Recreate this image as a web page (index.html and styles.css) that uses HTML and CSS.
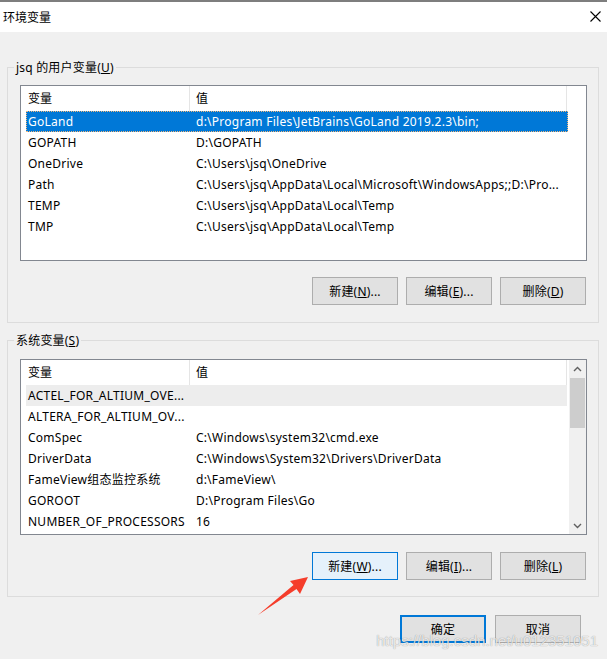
FILE: index.html
```html
<!DOCTYPE html>
<html lang="zh-CN">
<head>
<meta charset="utf-8">
<title>环境变量</title>
<link rel="stylesheet" href="styles.css">
</head>
<body>
<div class="topline"></div>
<header class="titlebar">
  <span class="title">环境变量</span>
  <svg class="close" width="11" height="11" viewBox="0 0 11 11"><path d="M0.5 0.5 L10.5 10.5 M10.5 0.5 L0.5 10.5" stroke="#000" stroke-width="1.1" fill="none"/></svg>
</header>
<main class="dialog">
  <fieldset class="group group-user">
    <legend>jsq 的用户变量(<u>U</u>)</legend>
    <div class="listbox">
      <div class="listbody">
        <div class="lhead"><span class="h1">变量</span><span class="h2">值</span></div>
        <div class="row selected"><span>GoLand</span><span>d:\Program Files\JetBrains\GoLand 2019.2.3\bin;</span></div>
        <div class="row"><span>GOPATH</span><span>D:\GOPATH</span></div>
        <div class="row"><span>OneDrive</span><span>C:\Users\jsq\OneDrive</span></div>
        <div class="row"><span>Path</span><span>C:\Users\jsq\AppData\Local\Microsoft\WindowsApps;;D:\Pro...</span></div>
        <div class="row"><span>TEMP</span><span>C:\Users\jsq\AppData\Local\Temp</span></div>
        <div class="row"><span>TMP</span><span>C:\Users\jsq\AppData\Local\Temp</span></div>
      </div>
    </div>
    <div class="btnrow">
      <button class="btn">新建(<u>N</u>)...</button>
      <button class="btn">编辑(<u>E</u>)...</button>
      <button class="btn">删除(<u>D</u>)</button>
    </div>
  </fieldset>

  <fieldset class="group group-sys">
    <legend>系统变量(<u>S</u>)</legend>
    <div class="listbox">
      <div class="listbody">
        <div class="lhead"><span class="h1">变量</span><span class="h2">值</span></div>
        <div class="row hover"><span>ACTEL_FOR_ALTIUM_OVE...</span><span></span></div>
        <div class="row"><span>ALTERA_FOR_ALTIUM_OV...</span><span></span></div>
        <div class="row"><span>ComSpec</span><span>C:\Windows\system32\cmd.exe</span></div>
        <div class="row"><span>DriverData</span><span>C:\Windows\System32\Drivers\DriverData</span></div>
        <div class="row"><span>FameView组态监控系统</span><span>d:\FameView\</span></div>
        <div class="row"><span>GOROOT</span><span>D:\Program Files\Go</span></div>
        <div class="row"><span>NUMBER_OF_PROCESSORS</span><span>16</span></div>
      </div>
      <div class="scrollbar">
        <div class="sb-btn"><svg width="9" height="6" viewBox="0 0 9 6"><path d="M1 5 L4.5 1.5 L8 5" stroke="#606060" stroke-width="1.4" fill="none"/></svg></div>
        <div class="sb-track"><div class="sb-thumb"></div></div>
        <div class="sb-btn"><svg width="9" height="6" viewBox="0 0 9 6"><path d="M1 1 L4.5 4.5 L8 1" stroke="#606060" stroke-width="1.4" fill="none"/></svg></div>
      </div>
    </div>
    <div class="btnrow">
      <button class="btn focused">新建(<u>W</u>)...</button>
      <button class="btn">编辑(<u>I</u>)...</button>
      <button class="btn">删除(<u>L</u>)</button>
    </div>
  </fieldset>

  <div class="dlgbtns">
    <button class="btn default">确定</button>
    <button class="btn">取消</button>
  </div>
</main>

<svg class="arrow" width="607" height="659" viewBox="0 0 607 659">
  <polygon points="258,615 293.5,585 290,581 308,577 300,594 296.5,589" fill="#f53d2b"/>
</svg>
<div class="watermark">https://blog.csdn.net/u012351051</div>
</body>
</html>
```

FILE: styles.css
```css
html, body {
  margin: 0;
  height: 659px;
  overflow: hidden;
}

body {
  position: relative;
  background: #f0f0f0;
  color: #000;
  font: 12px "Segoe UI", "Noto Sans", "Noto Sans CJK SC", sans-serif;
}

.topline {
  height: 2px;
  background: #7e7e7e;
}

.titlebar {
  height: 30px;
  background: #fff;
  display: flex;
  align-items: center;
  justify-content: space-between;
  padding: 0 6px 0 3px;
}

.title {
  font-size: 12px;
}

.close {
  display: block;
  margin-top: -1px;
}

.dialog {
  display: flex;
  flex-direction: column;
}

.group {
  min-width: 0;
  margin: 27px 8px 0 7px;
  padding: 9px 12px 17px 12px;
  border: 1px solid #dcdcdc;
}

.group legend {
  margin-left: -6px;
  padding: 0 2px;
  line-height: 17px;
  font-size: 12px;
  letter-spacing: 0.2px;
}

.group-sys {
  margin-top: 9px;
  padding-top: 10px;
  padding-bottom: 16px;
}

.listbox {
  height: 176px;
  box-sizing: border-box;
  margin-right: -1px;
  border: 1px solid #828790;
  background: #fff;
  display: flex;
  overflow: hidden;
}

.listbody {
  flex: 1;
  min-width: 0;
}

.lhead {
  display: flex;
  height: 25px;
  line-height: 25px;
}

.lhead span {
  box-sizing: border-box;
  border-right: 1px solid #e5e5e5;
}

.lhead .h1 {
  width: 169px;
  padding-left: 7px;
}

.lhead .h2 {
  width: 377px;
  padding-left: 6px;
}

.row {
  display: grid;
  grid-template-columns: 168px 1fr;
  width: 542px;
  height: 21px;
  line-height: 21px;
  margin-left: 5px;
  box-sizing: border-box;
}

.row span {
  padding-left: 2px;
  white-space: nowrap;
  overflow: hidden;
  letter-spacing: 0.25px;
}

.row.selected {
  background: #0078d7;
  color: #fff;
  outline: 1px dotted #f3b77a;
  outline-offset: -1px;
}

.row.hover {
  background: #ededed;
}

.group-sys .row {
  width: 541px;
}

.scrollbar {
  width: 17px;
  background: #f0f0f0;
  display: flex;
  flex-direction: column;
}

.sb-btn {
  height: 17px;
  display: flex;
  align-items: center;
  justify-content: center;
}

.sb-track {
  flex: 1;
  padding: 1px 1px 0;
}

.sb-thumb {
  height: 50px;
  background: #cdcdcd;
}

.btnrow {
  display: flex;
  justify-content: flex-end;
  gap: 8px;
  margin-top: 16px;
}

.group-sys .btnrow {
  margin-top: 17px;
}

.btn {
  width: 86px;
  height: 28px;
  box-sizing: border-box;
  margin: 0;
  padding: 0;
  border: 1px solid #adadad;
  background: #e1e1e1;
  color: #000;
  font: inherit;
  letter-spacing: 0.2px;
}

.btn.focused {
  border-color: #0078d7;
  background: #e5f1fb;
}

.btn.default {
  border: 2px solid #0078d7;
}

.dlgbtns {
  display: flex;
  justify-content: flex-end;
  gap: 9px;
  margin-top: 18px;
  padding-right: 26px;
}

.arrow {
  position: absolute;
  left: 0;
  top: 0;
  pointer-events: none;
}

.watermark {
  position: absolute;
  right: 9px;
  bottom: 10px;
  line-height: 18px;
  font: 15px "Liberation Sans", Arial, sans-serif;
  color: rgba(255, 255, 255, 0.8);
  text-shadow: 0 0 1px rgba(0, 0, 0, 0.45);
  pointer-events: none;
}
```
